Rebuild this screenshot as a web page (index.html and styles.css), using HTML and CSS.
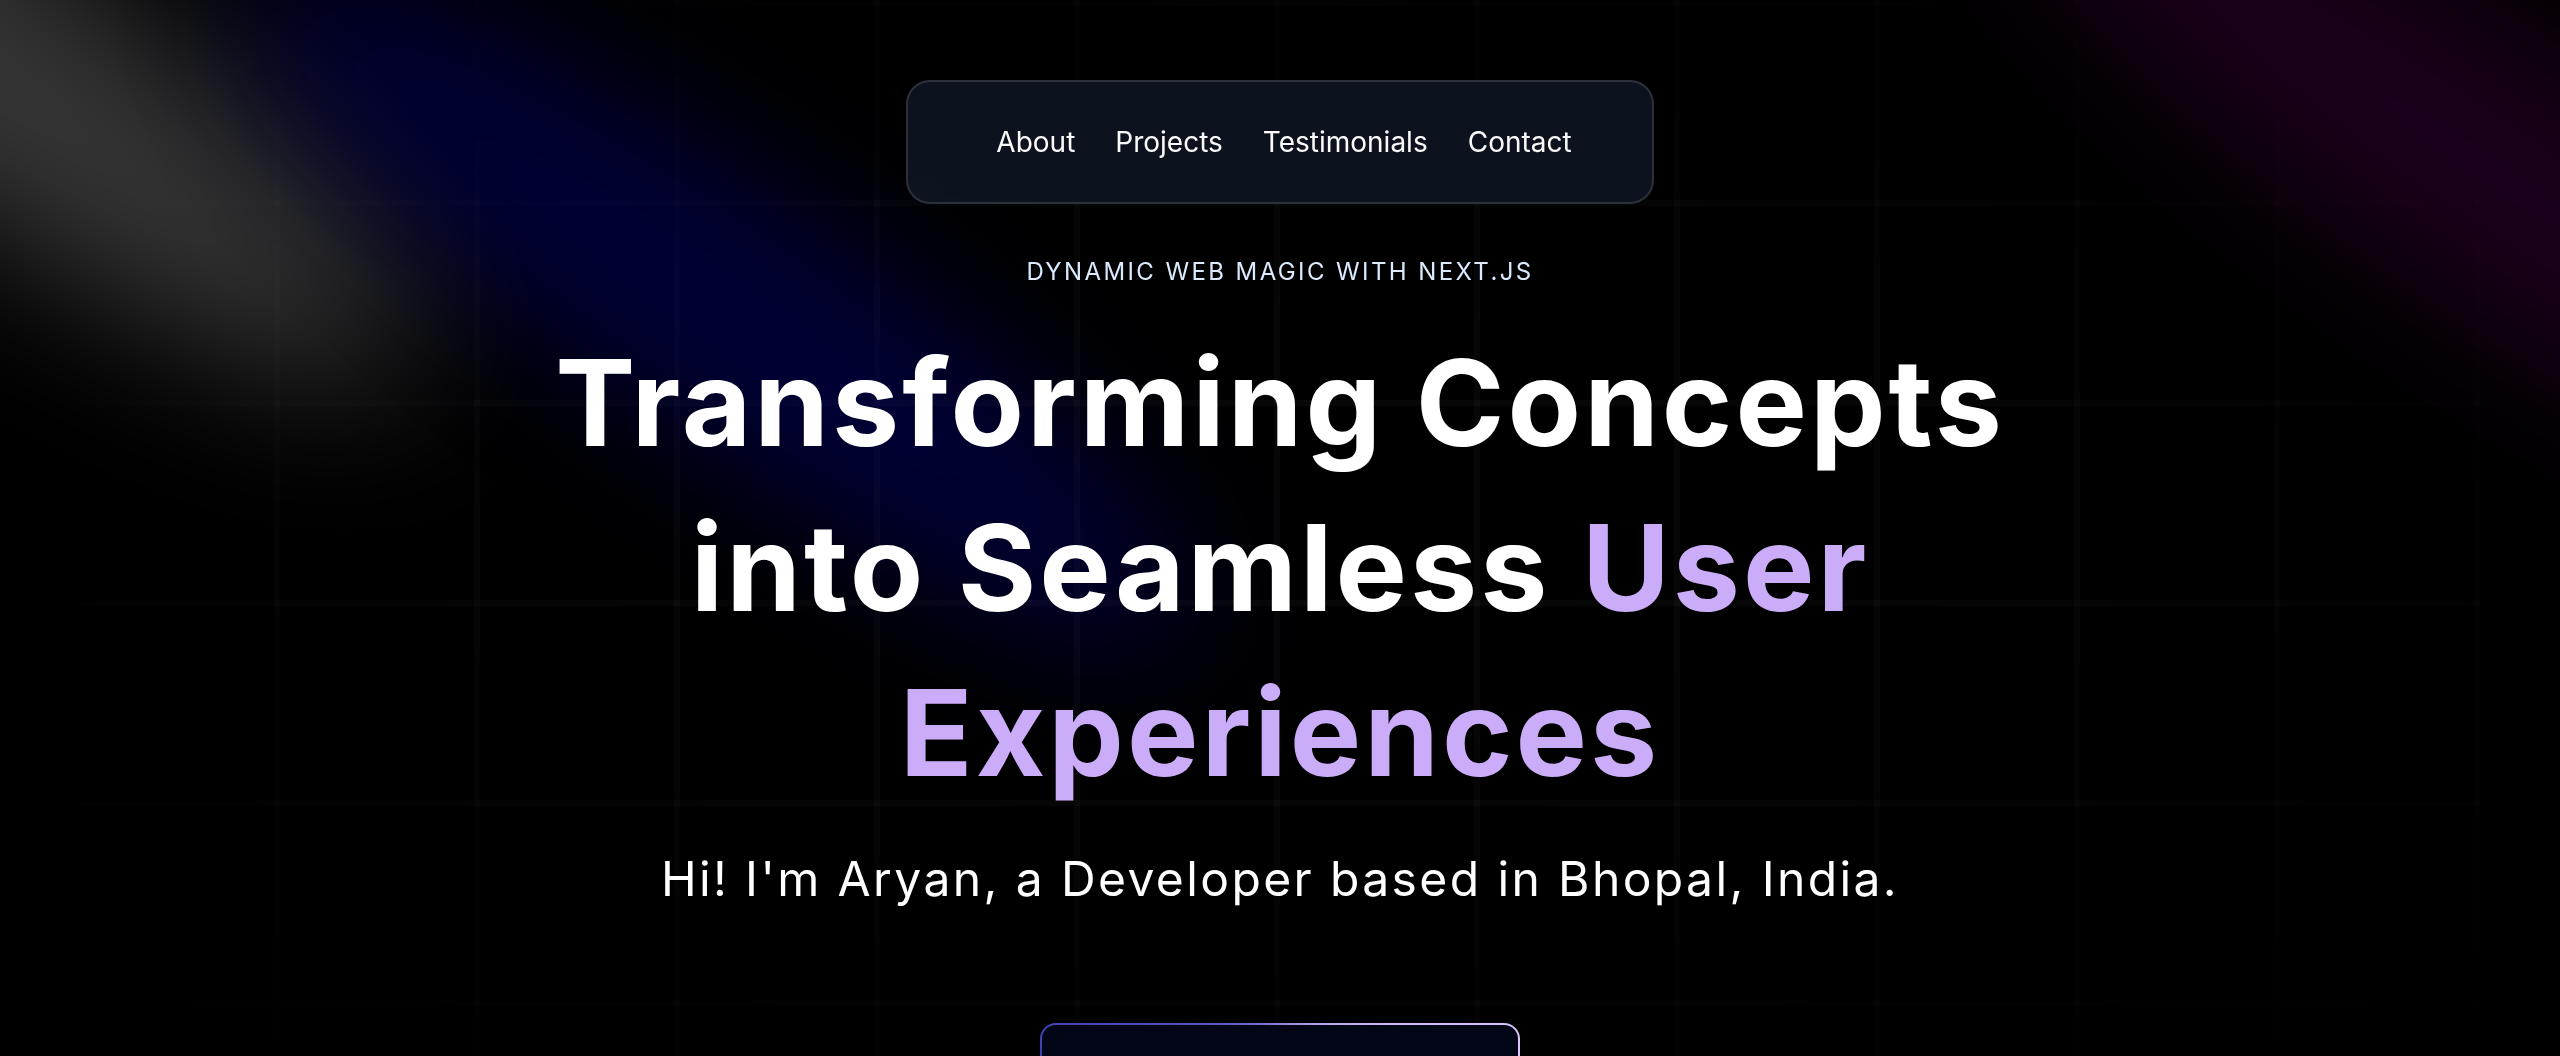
FILE: index.html
```
<!DOCTYPE html>
<html lang="en">
<head>
<meta charset="utf-8">
<title>Aryan | Portfolio</title>
<link rel="stylesheet" href="styles.css">
</head>
<body>
<main class="page">
  <svg class="spotlights" width="2560" height="1056" viewBox="0 0 2560 1056" aria-hidden="true">
    <defs>
      <filter id="blur-white" filterUnits="userSpaceOnUse" x="-1200" y="-900" width="2000" height="1700" color-interpolation-filters="sRGB">
        <feGaussianBlur stdDeviation="76"/>
      </filter>
      <filter id="blur-blue" filterUnits="userSpaceOnUse" x="-200" y="-500" width="1900" height="1500" color-interpolation-filters="sRGB">
        <feGaussianBlur stdDeviation="68"/>
      </filter>
      <filter id="blur-purple" filterUnits="userSpaceOnUse" x="1500" y="-700" width="1900" height="1500" color-interpolation-filters="sRGB">
        <feGaussianBlur stdDeviation="68"/>
      </filter>
    </defs>
    <g filter="url(#blur-white)">
      <ellipse cx="-176" cy="-40" rx="715.2" ry="140" transform="rotate(34.68 -176 -40)" fill="#ffffff" fill-opacity="0.21"/>
    </g>
    <g filter="url(#blur-blue)">
      <ellipse cx="720" cy="308.5" rx="572.1" ry="125" transform="rotate(34.68 720 308.5)" fill="#0000ff" fill-opacity="0.21"/>
    </g>
    <g filter="url(#blur-purple)">
      <ellipse cx="2480" cy="164.5" rx="572.1" ry="125" transform="rotate(34.68 2480 164.5)" fill="#800080" fill-opacity="0.21"/>
    </g>
  </svg>

  <div class="wrap">
    <div class="grid-bg">
      <div class="grid-fade"></div>
    </div>

    <nav class="floating-nav">
      <a class="nav-link" href="#about">About</a>
      <a class="nav-link" href="#projects">Projects</a>
      <a class="nav-link" href="#testimonials">Testimonials</a>
      <a class="nav-link" href="#contact">Contact</a>
    </nav>

    <section class="hero">
      <div class="hero-inner">
        <p class="eyebrow">Dynamic Web Magic with Next.js</p>
        <h1 class="headline">
          <span class="word">Transforming</span> <span class="word">Concepts</span> <span class="word">into</span> <span class="word">Seamless</span> <span class="word accent">User</span> <span class="word accent">Experiences</span>
        </h1>
        <p class="intro">Hi! I'm Aryan, a Developer based in Bhopal, India.</p>
        <a class="magic-btn" href="#about" aria-label="Show my work">
          <span class="magic-btn-inner">
            <svg class="btn-icon" viewBox="0 0 512 512" width="28" height="28" aria-hidden="true"><path fill="currentColor" d="M444.52 3.52L28.74 195.42c-47.970 22.390-31.980 92.750 19.190 92.750h175.910v175.910c0 51.170 70.360 67.170 92.750 19.190l191.900-415.780c15.990-38.390-25.590-79.970-63.970-63.970z"/></svg>
          </span>
        </a>
      </div>
    </section>
  </div>
</main>
</body>
</html>
```
FILE: styles.css
```
html {
  scrollbar-width: none;
}
html::-webkit-scrollbar {
  display: none;
}
body {
  margin: 0;
  background: #000000;
  color: #ffffff;
  font-family: "Inter", "Noto Sans", sans-serif;
}

.page {
  position: relative;
  overflow: hidden;
  min-height: 1056px;
  padding: 0 80px;
  background: #000000;
}

.spotlights {
  position: absolute;
  top: 0;
  left: 0;
  z-index: 1;
  pointer-events: none;
}

.wrap {
  position: relative;
  width: 100%;
}

.grid-bg {
  position: absolute;
  top: 0;
  left: 0;
  width: 100%;
  height: 1056px;
  background-color: #000000;
  background-image:
    linear-gradient(to bottom, rgba(255, 255, 255, 0.03) 0, rgba(255, 255, 255, 0.03) 6.25px, transparent 6.25px),
    linear-gradient(to right, transparent 193.75px, rgba(255, 255, 255, 0.03) 193.75px);
  background-size: 200px 200px;
}

.grid-fade {
  position: absolute;
  inset: 0;
  background: #000000;
  -webkit-mask-image: radial-gradient(ellipse at center, transparent 20%, black);
  mask-image: radial-gradient(ellipse at center, transparent 20%, black);
}

.floating-nav {
  position: fixed;
  top: 80px;
  left: 0;
  right: 0;
  margin: 0 auto;
  width: fit-content;
  z-index: 50;
  display: flex;
  align-items: center;
  gap: 40px;
  padding: 40px 80px 40px 88px;
  border: 2px solid rgba(255, 255, 255, 0.125);
  border-radius: 24px;
  background: rgba(17, 25, 40, 0.75);
  backdrop-filter: blur(16px) saturate(180%);
}

.nav-link {
  font-size: 28px;
  line-height: 40px;
  color: #fafafa;
  text-decoration: none;
}

.hero {
  position: relative;
  z-index: 10;
  display: flex;
  justify-content: center;
  padding-top: 256px;
}

.hero-inner {
  max-width: 1536px;
  display: flex;
  flex-direction: column;
  align-items: center;
}

.eyebrow {
  margin: 0;
  max-width: 640px;
  font-size: 24px;
  line-height: 32px;
  letter-spacing: 0.1em;
  text-transform: uppercase;
  text-align: center;
  color: #dbeafe;
}

.headline {
  margin: 32px 0;
  font-size: 120px;
  line-height: 165px;
  font-weight: 700;
  letter-spacing: 0.025em;
  text-align: center;
  color: #ffffff;
}

.accent {
  color: #cbacf9;
}

.intro {
  margin: 0 0 32px;
  font-size: 48px;
  line-height: 64px;
  letter-spacing: 0.05em;
  text-align: center;
  color: #ffffff;
}

.magic-btn {
  display: flex;
  box-sizing: border-box;
  width: 480px;
  height: 96px;
  margin-top: 80px;
  padding: 2px;
  border-radius: 16px;
  overflow: hidden;
  text-decoration: none;
  background: conic-gradient(from 90deg at 50% 50%, #e2cbff 0%, #393bb2 50%, #e2cbff 100%);
}

.magic-btn-inner {
  flex: 1;
  display: flex;
  align-items: center;
  justify-content: center;
  gap: 16px;
  padding: 0 56px;
  border-radius: 14px;
  background: #020617;
  color: #ffffff;
  font-size: 28px;
  font-weight: 500;
}

.btn-icon {
  display: block;
}
```
